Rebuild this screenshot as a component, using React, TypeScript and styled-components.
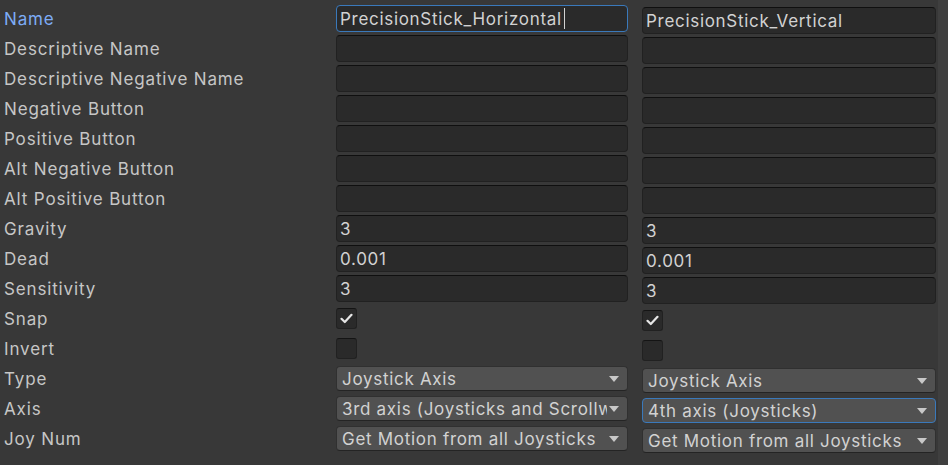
import React from "react";
import styled, { createGlobalStyle, css } from "styled-components";

const Global = createGlobalStyle`
  html, body { margin: 0; padding: 0; background: #383838; }
  body { font-family: Inter, "Noto Sans", "Liberation Sans", sans-serif; }
  * { box-sizing: border-box; }
`;

const Page = styled.div`
  display: flex;
  width: 948px;
  height: 465px;
  overflow: hidden;
  background: #383838;
`;

const Grid = styled.div`
  display: flex;
  width: 936px;
`;

const Column = styled.div<{ $width: number; $offset?: number; $gapLeft?: number }>`
  display: flex;
  flex-direction: column;
  gap: 3px;
  width: ${(p) => p.$width}px;
  flex: none;
  margin-left: ${(p) => p.$gapLeft ?? 0}px;
  padding-top: ${(p) => 5 + (p.$offset ?? 0)}px;
`;

const Cell = styled.div`
  height: 27px;
  display: flex;
  align-items: center;
`;

const Label = styled(Cell)<{ $active?: boolean }>`
  padding-left: 4px;
  font-size: 17px;
  letter-spacing: 0.85px;
  color: ${(p) => (p.$active ? "#7dacf6" : "#c6c6c6")};
  white-space: nowrap;
`;

const TextField = styled.div<{ $focused?: boolean }>`
  width: 100%;
  height: 27px;
  display: flex;
  align-items: center;
  padding-left: 3px;
  background: #2a2a2a;
  border: 1px solid #212121;
  border-top-color: #0f0f0f;
  border-radius: 4px;
  font-size: 17px;
  letter-spacing: 0.7px;
  color: #d2d2d2;
  white-space: nowrap;
  overflow: hidden;
  ${(p) =>
    p.$focused &&
    css`
      border-color: #3a79bb;
      border-top-color: #3a79bb;
    `}
`;

const Caret = styled.span`
  display: inline-block;
  width: 1px;
  height: 21px;
  margin-left: 2px;
  background: #d2d2d2;
`;

const Checkbox = styled.div`
  width: 21px;
  height: 21px;
  border-radius: 3px;
  background: #2a2a2a;
  border: 1px solid #212121;
  border-top-color: #141414;
  display: flex;
  align-items: center;
  justify-content: center;
`;

const Dropdown = styled.div<{ $focused?: boolean }>`
  width: 100%;
  height: 25px;
  display: flex;
  align-items: center;
  padding: 0 8px 0 5px;
  gap: 2px;
  background: #515151;
  border: 1px solid #303030;
  border-bottom-color: #242424;
  border-radius: 4px;
  font-size: 17px;
  letter-spacing: 0.7px;
  color: #d2d2d2;
  ${(p) =>
    p.$focused &&
    css`
      border-color: #3a79bb;
      border-bottom-color: #3a79bb;
    `}
`;

const DropText = styled.span`
  flex: 1;
  min-width: 0;
  white-space: nowrap;
  overflow: hidden;
`;

const Arrow = styled.svg`
  flex: none;
  width: 10px;
  height: 6px;
`;

const Scrollbar = styled.div`
  width: 10px;
  margin-left: 2px;
  flex: none;
  background: #3f3f3f;
`;

const labels = [
  "Name",
  "Descriptive Name",
  "Descriptive Negative Name",
  "Negative Button",
  "Positive Button",
  "Alt Negative Button",
  "Alt Positive Button",
  "Gravity",
  "Dead",
  "Sensitivity",
  "Snap",
  "Invert",
  "Type",
  "Axis",
  "Joy Num",
];

type AxisData = {
  name: string;
  gravity: string;
  dead: string;
  sensitivity: string;
  snap: boolean;
  invert: boolean;
  type: string;
  axis: string;
  joy: string;
  nameFocused?: boolean;
  axisFocused?: boolean;
};

const axes: AxisData[] = [
  {
    name: "PrecisionStick_Horizontal",
    gravity: "3",
    dead: "0.001",
    sensitivity: "3",
    snap: true,
    invert: false,
    type: "Joystick Axis",
    axis: "3rd axis (Joysticks and Scrollwheel)",
    joy: "Get Motion from all Joysticks",
    nameFocused: true,
  },
  {
    name: "PrecisionStick_Vertical",
    gravity: "3",
    dead: "0.001",
    sensitivity: "3",
    snap: true,
    invert: false,
    type: "Joystick Axis",
    axis: "4th axis (Joysticks)",
    joy: "Get Motion from all Joysticks",
    axisFocused: true,
  },
];

const Check = () => (
  <svg width="13" height="11" viewBox="0 0 13 11">
    <path d="M1.5 5.8 L4.8 9 L11.5 1.8" fill="none" stroke="#e6e6e6" strokeWidth="2.2" strokeLinecap="round" strokeLinejoin="round" />
  </svg>
);

const DropArrow = () => (
  <Arrow viewBox="0 0 10 6">
    <path d="M0 0 H10 L5 6 Z" fill="#c8c8c8" />
  </Arrow>
);

const Select = ({ value, focused }: { value: string; focused?: boolean }) => (
  <Cell>
    <Dropdown $focused={focused}>
      <DropText>{value}</DropText>
      <DropArrow />
    </Dropdown>
  </Cell>
);

const Text = ({ value, focused, caret }: { value?: string; focused?: boolean; caret?: boolean }) => (
  <Cell>
    <TextField $focused={focused}>
      {value}
      {caret && <Caret />}
    </TextField>
  </Cell>
);

const Toggle = ({ on }: { on: boolean }) => (
  <Cell>
    <Checkbox>{on && <Check />}</Checkbox>
  </Cell>
);

const AxisColumn = ({ a }: { a: AxisData }) => (
  <>
    <Text value={a.name} focused={a.nameFocused} caret={a.nameFocused} />
    <Text />
    <Text />
    <Text />
    <Text />
    <Text />
    <Text />
    <Text value={a.gravity} />
    <Text value={a.dead} />
    <Text value={a.sensitivity} />
    <Toggle on={a.snap} />
    <Toggle on={a.invert} />
    <Select value={a.type} />
    <Select value={a.axis} focused={a.axisFocused} />
    <Select value={a.joy} />
  </>
);

export default function App() {
  return (
    <>
      <Global />
      <Page>
        <Grid>
          <Column $width={336}>
            {labels.map((l, i) => (
              <Label key={l} $active={i === 0}>
                {l}
              </Label>
            ))}
          </Column>
          <Column $width={292}>
            <AxisColumn a={axes[0]} />
          </Column>
          <Column $width={294} $offset={2} $gapLeft={14}>
            <AxisColumn a={axes[1]} />
          </Column>
        </Grid>
        <Scrollbar />
      </Page>
    </>
  );
}
